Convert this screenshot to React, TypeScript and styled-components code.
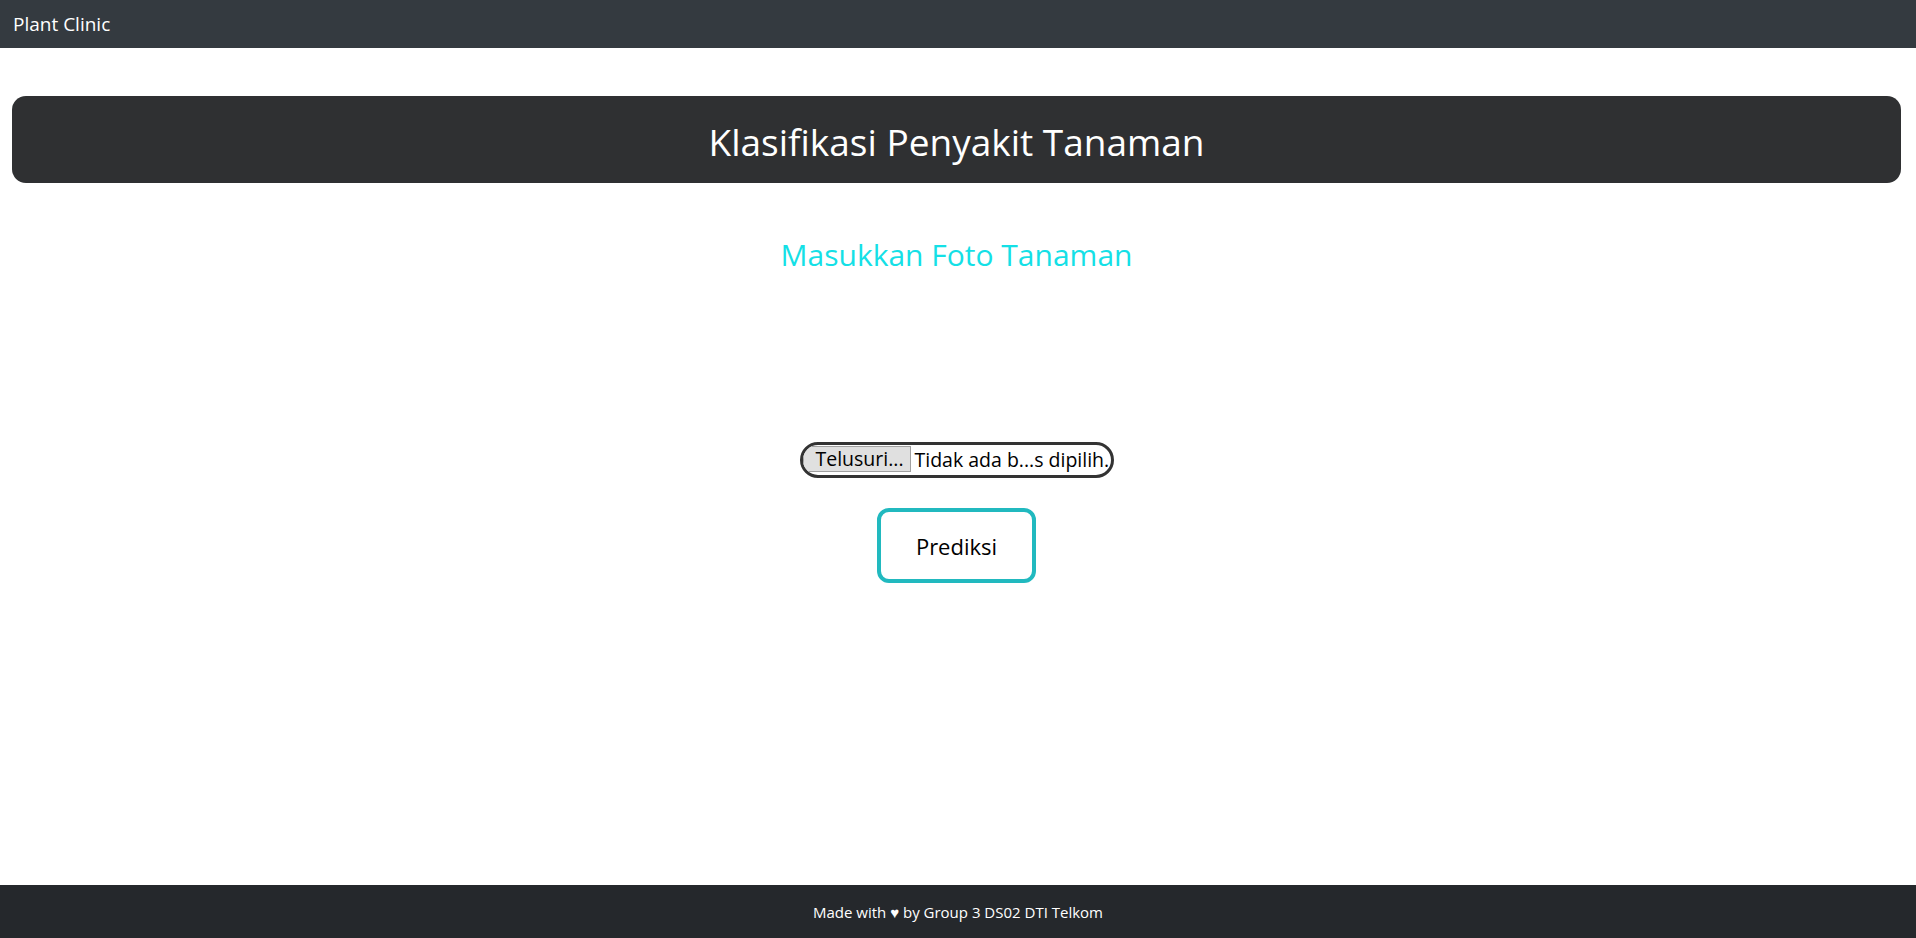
import React from "react";
import styled, { createGlobalStyle } from "styled-components";

const GlobalStyle = createGlobalStyle`
  html, body { margin: 0; padding: 0; background: #ffffff; }
  body { font-family: "Open Sans", "Noto Sans", sans-serif; color: #212529; }
  * { box-sizing: border-box; }
`;

const Page = styled.div`
  min-height: 100vh;
  display: flex;
  flex-direction: column;
`;

const Navbar = styled.nav`
  height: 48px;
  background: #343a40;
  display: flex;
  align-items: center;
  padding-left: 13px;
`;

const Brand = styled.span`
  color: #ffffff;
  font-size: 19px;
`;

const Main = styled.main`
  flex: 1;
  display: flex;
  flex-direction: column;
  align-items: center;
  padding: 48px 15px 0 12px;
`;

const HeaderCard = styled.div`
  align-self: stretch;
  height: 87px;
  background: #2f3032;
  border-radius: 14px;
  display: flex;
  align-items: center;
  justify-content: center;
`;

const Title = styled.h1`
  margin: 0;
  color: #ffffff;
  font-weight: 400;
  font-size: 37px;
  line-height: 1;
  padding-top: 3px;
`;

const Subtitle = styled.h3`
  margin: 56px 0 0;
  color: #14e0e6;
  font-weight: 400;
  font-size: 30px;
  line-height: 32px;
`;

const Form = styled.form`
  display: flex;
  flex-direction: column;
  align-items: center;
  margin-top: 171px;
`;

const FilePicker = styled.label`
  display: flex;
  align-items: flex-start;
  width: 314px;
  height: 36px;
  border: 3px solid #333333;
  border-radius: 18px;
  overflow: hidden;
  background: #fff;
  cursor: pointer;
  padding-top: 1px;
`;

const HiddenInput = styled.input`
  display: none;
`;

const BrowseButton = styled.span`
  display: flex;
  align-items: center;
  justify-content: center;
  flex-shrink: 0;
  height: 26px;
  width: 108px;
  background: #e0e0e0;
  border: 1px solid #a0a0a0;
  color: #000;
  font-size: 19.5px;
  line-height: 1;
  padding-left: 6px;
`;

const FileName = styled.span`
  display: flex;
  align-items: center;
  height: 26px;
  padding-left: 4px;
  color: #000;
  font-size: 19.5px;
  white-space: nowrap;
`;

const PredictButton = styled.button`
  margin-top: 30px;
  width: 159px;
  height: 75px;
  border: 4px solid #21b9bf;
  border-radius: 12px;
  background: #ffffff;
  color: #000;
  font-family: inherit;
  font-size: 22px;
  cursor: pointer;
`;

const Footer = styled.footer`
  height: 53px;
  background: #25282c;
  display: flex;
  align-items: center;
  justify-content: center;
  color: #ffffff;
  font-size: 15px;
`;

export default function App() {
  return (
    <Page>
      <GlobalStyle />
      <Navbar>
        <Brand>Plant Clinic</Brand>
      </Navbar>
      <Main>
        <HeaderCard>
          <Title>Klasifikasi Penyakit Tanaman</Title>
        </HeaderCard>
        <Subtitle>Masukkan Foto Tanaman</Subtitle>
        <Form onSubmit={(e) => e.preventDefault()}>
          <FilePicker>
            <HiddenInput type="file" />
            <BrowseButton>Telusuri...</BrowseButton>
            <FileName>Tidak ada b...s dipilih.</FileName>
          </FilePicker>
          <PredictButton type="submit">Prediksi</PredictButton>
        </Form>
      </Main>
      <Footer>Made with ♥ by Group 3 DS02 DTI Telkom</Footer>
    </Page>
  );
}
